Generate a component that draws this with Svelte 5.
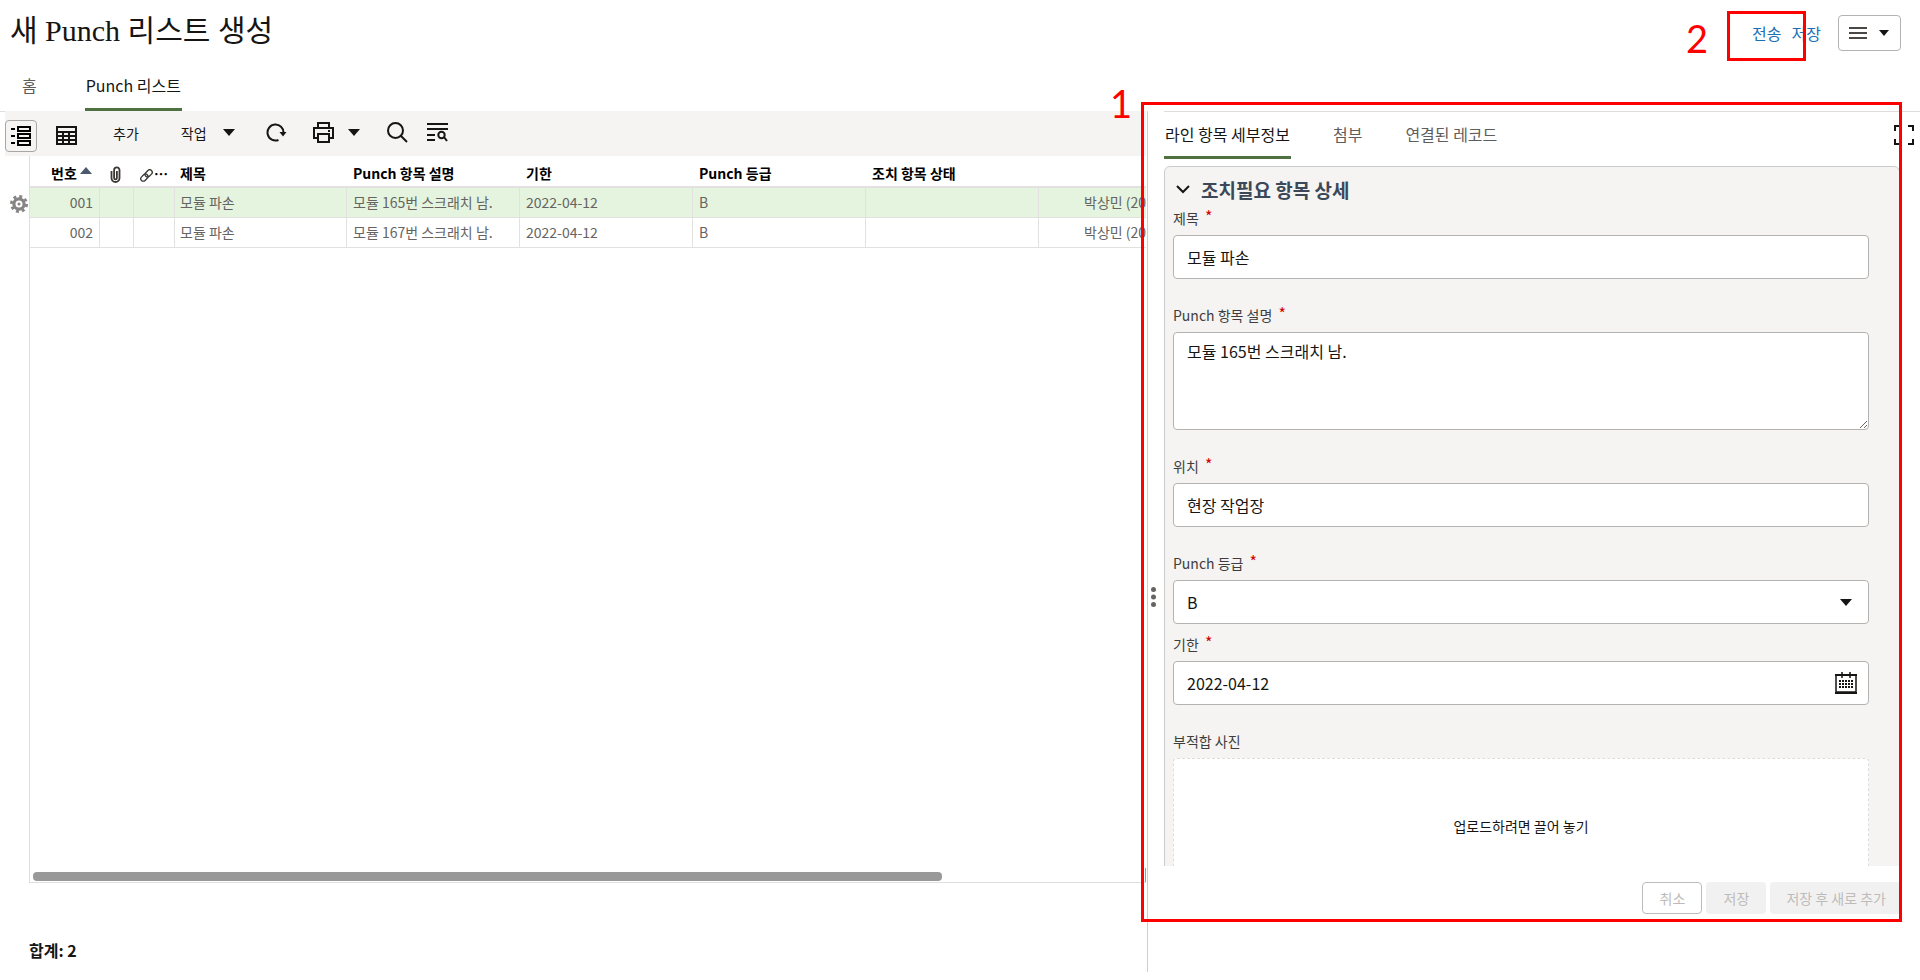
<script>
  const columns = [
    { key: 'no', label: '번호', size: 70 },
    { key: 'file', label: '첨부', size: 34 },
    { key: 'link', label: '링크', size: 41 },
    { key: 'title', label: '제목', size: 172 },
    { key: 'desc', label: 'Punch 항목 설명', size: 173 },
    { key: 'due', label: '기한', size: 173 },
    { key: 'grade', label: 'Punch 등급', size: 173 },
    { key: 'status', label: '조치 항목 상태', size: 173 },
    { key: 'owner', label: '', size: 173 },
  ];

  const rows = [
    { no: '001', title: '모듈 파손', desc: '모듈 165번 스크래치 남.', due: '2022-04-12', grade: 'B', owner: '박상민 (20' },
    { no: '002', title: '모듈 파손', desc: '모듈 167번 스크래치 남.', due: '2022-04-12', grade: 'B', owner: '박상민 (20' },
  ];

  const detailTabs = ['라인 항목 세부정보', '첨부', '연결된 레코드'];

  let selected = $state('001');
  let activeTab = $state(0);
  let form = $state({
    title: '모듈 파손',
    desc: '모듈 165번 스크래치 남.',
    place: '현장 작업장',
    grade: 'B',
    due: '2022-04-12',
  });
</script>

{#snippet caret()}
  <svg class="caret" width="12" height="7" viewBox="0 0 12 7" aria-hidden="true"><path d="M0 0h12L6 7z" fill="currentColor" /></svg>
{/snippet}

<div class="page">
  <header class="top">
    <h1>새 Punch 리스트 생성</h1>
    <div class="actions">
      <a href="#send">전송</a>
      <a href="#save">저장</a>
      <button class="menu-btn" aria-label="메뉴">
        <svg width="18" height="12" viewBox="0 0 18 12"><path d="M0 1h18M0 6h18M0 11h18" stroke="#4a4744" stroke-width="2" /></svg>
        <svg width="10" height="6" viewBox="0 0 10 6"><path d="M0 0h10L5 6z" fill="#161513" /></svg>
      </button>
    </div>
  </header>

  <nav class="tabs">
    <a href="#home">홈</a>
    <a href="#list" class="active">Punch 리스트</a>
  </nav>

  <main>
    <section class="list-pane">
      <div class="toolbar">
        <button class="tool view on" aria-label="분할 보기">
          <svg width="20" height="20" viewBox="0 0 20 20">
            <path d="M0 3h4M0 10h4M0 17h4" stroke="#000" stroke-width="2" />
            <path d="M7 1h12v4H7zM7 8h12v4H7zM7 15h12v4H7z" fill="none" stroke="#000" stroke-width="2" />
          </svg>
        </button>
        <button class="tool view grid-view" aria-label="표 보기">
          <svg width="21" height="19" viewBox="0 0 21 19">
            <path d="M1 1h19v17H1z" fill="none" stroke="#161513" stroke-width="2" />
            <path d="M1 6h19M1 10h19M1 14h19M7 5v13M13 5v13" stroke="#161513" stroke-width="2" />
          </svg>
        </button>
        <button class="tool add">추가</button>
        <button class="tool work">작업 {@render caret()}</button>
        <button class="tool refresh" aria-label="새로 고침">
          <svg width="21" height="19" viewBox="0 0 21 19">
            <path d="M12.500 17A8 8 0 1 1 17.500 10" fill="none" stroke="#161513" stroke-width="2" />
            <path d="M13.500 9h7l-3.500 4.500z" fill="#161513" />
          </svg>
        </button>
        <button class="tool print" aria-label="인쇄">
          <svg width="21" height="21" viewBox="0 0 21 21" fill="none" stroke="#161513" stroke-width="2">
            <path d="M5 6V1h11v5M5 16H1V6h19v10h-4" />
            <path d="M5 12h11v8H5z" />
            <path d="M15 9h2" />
          </svg>
          {@render caret()}
        </button>
        <button class="tool search" aria-label="검색">
          <svg width="21" height="21" viewBox="0 0 21 21" fill="none" stroke="#161513" stroke-width="2">
            <circle cx="8.500" cy="8.500" r="7.500" /><path d="M14 14l6 6" />
          </svg>
        </button>
        <button class="tool find" aria-label="목록에서 찾기">
          <svg width="21" height="19" viewBox="0 0 21 19" fill="none" stroke="#161513" stroke-width="2">
            <path d="M0 1h21M0 6h21M0 12h8M0 17h8" />
            <circle cx="14.500" cy="12" r="3.200" /><path d="M17 14l3 4" />
          </svg>
        </button>
      </div>

      <div class="list-body">
        <div class="gutter">
          <button class="gear" aria-label="행 설정">
            <svg width="18" height="18" viewBox="0 0 18 18">
              <circle cx="9" cy="9" r="7.600" fill="none" stroke="#878583" stroke-width="2.800" stroke-dasharray="2.985 2.985" />
              <circle cx="9" cy="9" r="5.100" fill="none" stroke="#878583" stroke-width="3.200" />
              <circle cx="9" cy="9" r="1.500" fill="#878583" />
            </svg>
          </button>
        </div>
        <div class="table-box">
          <div class="table-clip">
            <table>
              <colgroup>
                {#each columns as col}
                  <col style="width: {col.size}px" />
                {/each}
              </colgroup>
              <thead>
                <tr>
                  {#each columns as col}
                    <th class={col.key} scope="col">
                      {#if col.key === 'file'}
                        <svg width="11" height="17" viewBox="0 0 11 17" fill="none" stroke="#3a3835" stroke-width="1.800" role="img" aria-label={col.label}>
                          <path d="M1.500 5v7a4 4 0 0 0 8 0V4a2.700 2.700 0 0 0-5.400 0v8a1.400 1.400 0 0 0 2.800 0V5" />
                        </svg>
                      {:else if col.key === 'link'}
                        <svg width="13" height="13" viewBox="0 0 13 13" fill="none" stroke="#3a3835" stroke-width="1.300" role="img" aria-label={col.label}>
                          <g transform="rotate(-45 6.500 6.500)">
                            <rect x="-0.500" y="4" width="8" height="5" rx="2.500" />
                            <rect x="5.500" y="4" width="8" height="5" rx="2.500" />
                          </g>
                        </svg><span class="more">⋯</span>
                      {:else}
                        {col.label}
                      {/if}
                      {#if col.key === 'no'}
                        <svg class="sort" width="12" height="7" viewBox="0 0 12 7" aria-hidden="true"><path d="M0 7h12L6 0z" fill="#4c5a6e" /></svg>
                      {/if}
                    </th>
                  {/each}
                </tr>
              </thead>
              <tbody>
                {#each rows as row}
                  <tr class:selected={selected === row.no} onclick={() => (selected = row.no)}>
                    {#each columns as col}
                      <td class={col.key}>{row[col.key] ?? ''}</td>
                    {/each}
                  </tr>
                {/each}
              </tbody>
            </table>
          </div>
          <div class="scroll-x"><div class="thumb"></div></div>
        </div>
      </div>
      <div class="total">합계: 2</div>
    </section>

    <div class="splitter">
      <svg width="5" height="20" viewBox="0 0 5 20" fill="#666462" aria-hidden="true">
        <circle cx="2.500" cy="2.500" r="2.500" /><circle cx="2.500" cy="10" r="2.500" /><circle cx="2.500" cy="17.500" r="2.500" />
      </svg>
    </div>

    <section class="detail-pane">
      <div class="detail-head">
        <div class="detail-tabs">
          {#each detailTabs as tab, i}
            <button class:active={activeTab === i} onclick={() => (activeTab = i)}>{tab}</button>
          {/each}
        </div>
        <button class="expand" aria-label="전체 화면">
          <svg width="20" height="20" viewBox="0 0 20 20" fill="none" stroke="#161513" stroke-width="2">
            <path d="M1 6V1h5M14 1h5v5M19 14v5h-5M6 19H1v-5" />
          </svg>
        </button>
      </div>

      <form class="detail-form">
        <div class="panel">
          <h2>
            <svg width="14" height="9" viewBox="0 0 14 9" fill="none" stroke="#161513" stroke-width="2" aria-hidden="true"><path d="M1 1l6 6 6-6" /></svg>
            조치필요 항목 상세
          </h2>
          <div class="field">
            <label for="f-title">제목 <span class="req">*</span></label>
            <input id="f-title" type="text" bind:value={form.title} />
          </div>
          <div class="field">
            <label for="f-desc">Punch 항목 설명 <span class="req">*</span></label>
            <textarea id="f-desc" bind:value={form.desc}></textarea>
          </div>
          <div class="field">
            <label for="f-place">위치 <span class="req">*</span></label>
            <input id="f-place" type="text" bind:value={form.place} />
          </div>
          <div class="field tight">
            <label for="f-grade">Punch 등급 <span class="req">*</span></label>
            <div class="control">
              <select id="f-grade" bind:value={form.grade}>
                <option>A</option>
                <option>B</option>
                <option>C</option>
              </select>
              <span class="adorn">{@render caret()}</span>
            </div>
          </div>
          <div class="field">
            <label for="f-due">기한 <span class="req">*</span></label>
            <div class="control">
              <input id="f-due" type="text" bind:value={form.due} />
              <span class="adorn">
                <svg width="22" height="22" viewBox="0 0 22 22" fill="none" stroke="#161513" aria-hidden="true">
                  <path d="M1 3h20v17H1z" stroke-width="1.500" />
                  <path d="M0 3h22M0 21h22" stroke-width="2" />
                  <path d="M7 0v6M15 0v6" stroke-width="1.500" />
                  <path d="M4 9h14M4 12h14M4 15h14" stroke-width="2" stroke-dasharray="2 1" />
                </svg>
              </span>
            </div>
          </div>
          <div class="field">
            <label for="f-photo">부적합 사진</label>
            <label class="drop">
              업로드하려면 끌어 놓기
              <input id="f-photo" type="file" hidden />
            </label>
          </div>
        </div>
      </form>

      <footer>
        <button class="outline" disabled>취소</button>
        <button disabled>저장</button>
        <button class="wide" disabled>저장 후 새로 추가</button>
      </footer>
    </section>
  </main>

  <div class="mark mark-1"><b>1</b></div>
  <div class="mark mark-2"><b>2</b></div>
</div>

<style>
  :global(body) {
    background: #fff;
    color: #161513;
    font: 14px/20px 'Noto Sans CJK KR', sans-serif;
  }

  .page, .page * {
    box-sizing: border-box;
  }

  .page {
    position: relative;
    display: flex;
    flex-direction: column;
    height: 100vh;
    padding-bottom: 8px;
    overflow: hidden;
  }

  button, input, select, textarea {
    font: inherit;
    color: inherit;
  }

  button {
    padding: 0;
    border: none;
    background: none;
    cursor: pointer;
  }

  svg {
    display: block;
    flex-shrink: 0;
  }

  /* header */
  .top {
    display: flex;
    justify-content: space-between;
    align-items: center;
    height: 66px;
    padding: 0 19px 0 10px;
  }

  h1 {
    margin: 0 0 4px;
    font: 400 30px/40px 'Liberation Serif', 'Noto Sans CJK KR', serif;
  }

  .actions {
    display: flex;
    align-items: center;
    gap: 10px;
    font-size: 16px;
  }

  .actions a {
    color: #1a6fb5;
    text-decoration: none;
  }

  .menu-btn {
    display: flex;
    align-items: center;
    gap: 12px;
    height: 36px;
    margin-left: 7px;
    padding: 0 11px 0 10px;
    border: 1px solid #b5b3b1;
    border-radius: 4px;
  }

  .tabs {
    display: flex;
    gap: 47px;
    height: 46px;
    padding-left: 21px;
    border-bottom: 1px solid #dedddc;
    font-size: 16px;
  }

  .tabs a {
    height: 45px;
    padding: 9px 1px 0;
    border-bottom: 3px solid transparent;
    color: #5f5d5b;
    text-decoration: none;
  }

  .tabs a.active {
    color: #161513;
    border-color: #4f7040;
  }

  main {
    flex: 1;
    display: grid;
    grid-template-columns: minmax(0, 1142fr) 17px minmax(0, 756fr);
    min-height: 0;
    margin: -1px 0 0 5px;
  }

  /* list */
  .list-pane {
    display: flex;
    flex-direction: column;
    min-height: 0;
    background: #fff;
  }

  .toolbar {
    display: flex;
    align-items: center;
    height: 45px;
    margin-right: 1px;
    background: #f5f4f2;
  }

  .tool {
    display: flex;
    align-items: center;
    padding-bottom: 2px;
  }

  .view {
    justify-content: center;
    width: 32px;
    height: 32px;
    margin-top: 4px;
    padding: 0;
    border: 1px solid transparent;
    border-radius: 4px;
  }

  .view.on { border-color: #a9a7a5; }
  .grid-view { margin-left: 13px; }
  .add { margin-left: 31px; }
  .work { gap: 16px; margin-left: 42px; }
  .refresh { margin-left: 31px; }
  .print { gap: 14px; margin-left: 26px; }
  .search { margin-left: 27px; }
  .find { margin-left: 19px; }

  .list-body {
    flex: 1;
    display: flex;
    min-height: 0;
  }

  .gutter {
    width: 24px;
    padding: 39px 0 0 5px;
  }

  .table-box {
    flex: 1;
    display: flex;
    flex-direction: column;
    min-width: 0;
    margin-right: 1px;
    border-left: 1px solid #dfdedd;
    border-bottom: 1px solid #dfdedd;
  }

  .table-clip {
    flex: 1;
    overflow: hidden;
  }

  table {
    width: 1182px;
    table-layout: fixed;
    border-collapse: separate;
    border-spacing: 0;
  }

  th, td {
    padding: 0 6px;
    text-align: left;
    white-space: nowrap;
  }

  th {
    height: 32px;
    padding-top: 4px;
    border-bottom: 2px solid #e2e1e0;
    font-weight: 700;
    color: #000;
  }

  td {
    height: 30px;
    padding-bottom: 2px;
    border-right: 1px solid #e2e1e0;
    border-bottom: 1px solid #e2e1e0;
    color: #666462;
  }

  tr.selected td {
    background: #e4f4de;
  }

  th.no, td.no { text-align: right; }
  th.no { padding-right: 8px; }
  th.title, td.title { padding-left: 5px; }
  td.owner { padding-left: 45px; }
  th.file { padding-left: 10px; }
  th svg { display: inline-block; vertical-align: middle; }
  th .sort { vertical-align: 5px; }
  .more { margin-left: 1px; }

  .scroll-x {
    height: 14px;
    padding: 4px 3px 0;
    border-right: 1px solid #999;
  }

  .thumb {
    width: 82%;
    height: 9px;
    border-radius: 4px;
    background: #999;
  }

  .total {
    height: 89px;
    padding: 57px 0 0 24px;
    font-size: 16px;
    font-weight: 700;
  }

  .splitter {
    padding: 476px 0 0 3px;
    border-left: 1px solid #cfcecd;
    background: #fff;
  }

  /* details */
  .detail-pane {
    display: flex;
    flex-direction: column;
    min-height: 0;
    padding-bottom: 58px;
  }

  .detail-head {
    display: flex;
    justify-content: space-between;
    align-items: flex-start;
    padding: 0 6px 7px 0;
  }

  .detail-tabs {
    display: flex;
    gap: 41px;
  }

  .detail-tabs button {
    height: 48px;
    padding: 0 1px;
    border-bottom: 3px solid transparent;
    font-size: 16px;
    color: #5f5d5b;
  }

  .detail-tabs button.active {
    color: #161513;
    border-color: #4f7040;
  }

  .expand {
    padding-top: 14px;
  }

  .detail-form {
    flex: 1;
    min-height: 0;
    margin-right: 20px;
    overflow: hidden;
  }

  .panel {
    padding: 11px 30px 27px 8px;
    border: 1px solid #cccbca;
    border-radius: 6px;
    background: #f5f4f2;
  }

  h2 {
    display: flex;
    align-items: center;
    gap: 11px;
    margin: 0 0 6px;
    padding-left: 3px;
    font-size: 19px;
    line-height: 24px;
    color: #3c4858;
  }

  h2 svg {
    margin-bottom: 2px;
  }

  .field {
    margin-bottom: 26px;
  }

  .field.tight {
    margin-bottom: 10px;
  }

  .field > label:first-child {
    display: block;
    height: 20px;
    margin-bottom: 7px;
    color: #403e3c;
  }

  .req {
    margin-left: 3px;
    vertical-align: 1px;
    font-size: 16px;
    line-height: 12px;
    color: #d60000;
  }

  .field input, .field select, .field textarea {
    display: block;
    width: 100%;
    height: 44px;
    padding: 0 13px;
    border: 1px solid #b5b3b1;
    border-radius: 4px;
    background: #fff;
    font-size: 16px;
    appearance: none;
  }

  .field textarea {
    height: 98px;
    padding-top: 8px;
    resize: vertical;
  }

  .field input[hidden] {
    display: none;
  }

  .control {
    position: relative;
  }

  .adorn {
    position: absolute;
    top: 0;
    right: 0;
    display: flex;
    align-items: center;
    justify-content: center;
    width: 46px;
    height: 44px;
    pointer-events: none;
  }

  .drop {
    display: flex;
    align-items: center;
    justify-content: center;
    height: 136px;
    border: 1px dashed #dedddc;
    border-radius: 4px;
    background: #fff;
  }

  footer {
    display: flex;
    justify-content: flex-end;
    gap: 4px;
    padding: 16px 18px 0 0;
  }

  footer button {
    min-width: 60px;
    height: 32px;
    border-radius: 4px;
    background: #f2f1f1;
    color: #bebcba;
  }

  footer .outline {
    border: 1px solid #bebcba;
    background: #fff;
  }

  footer .wide {
    padding: 0 16px;
  }

  /* callout boxes over the page */
  .mark {
    position: absolute;
    border: 3px solid #f00;
    pointer-events: none;
  }

  .mark b {
    position: absolute;
    font: 400 38px/40px Lato, sans-serif;
    color: #f00;
  }

  .mark-1 {
    top: 102px;
    right: 18px;
    bottom: 58px;
    left: 1141px;
  }

  .mark-1 b {
    top: -22px;
    left: -34px;
  }

  .mark-2 {
    top: 11px;
    right: 114px;
    width: 79px;
    height: 50px;
  }

  .mark-2 b {
    top: 4px;
    left: -44px;
  }
</style>
